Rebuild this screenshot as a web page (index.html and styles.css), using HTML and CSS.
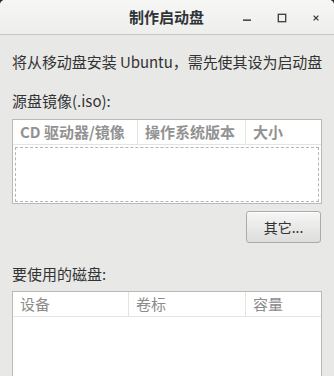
FILE: index.html
```html
<!DOCTYPE html>
<html lang="zh">
<head>
<meta charset="utf-8">
<title>制作启动盘</title>
<link rel="stylesheet" href="styles.css">
</head>
<body>
<div class="window">
  <div class="titlebar">
    <div class="title">制作启动盘</div>
    <div class="controls">
      <span class="ctl"><svg width="12" height="12" viewBox="0 0 12 12"><rect x="2" y="7.4" width="8" height="1.5" fill="#3c3c3c"/></svg></span>
      <span class="ctl"><svg width="12" height="12" viewBox="0 0 12 12"><rect x="2.3" y="2.3" width="7.4" height="7.4" fill="none" stroke="#3c3c3c" stroke-width="1.3"/></svg></span>
      <span class="ctl"><svg width="12" height="12" viewBox="0 0 12 12"><path d="M3.6 3.6 L8.4 8.4 M8.4 3.6 L3.6 8.4" stroke="#3c3c3c" stroke-width="1.3"/></svg></span>
    </div>
  </div>
  <div class="content">
    <p class="intro">将从移动盘安装 Ubuntu，需先使其设为启动盘</p>
    <p class="label l2">源盘镜像(.iso):</p>
    <div class="table t1">
      <div class="thead">
        <div class="th c1">CD 驱动器/镜像</div>
        <div class="th c2">操作系统版本</div>
        <div class="th c3">大小</div>
      </div>
      <div class="tbody"><div class="drop"></div></div>
    </div>
    <div class="btnrow"><button class="btn">其它...</button></div>
    <p class="label l3">要使用的磁盘:</p>
    <div class="table t2">
      <div class="thead">
        <div class="th d1">设备</div>
        <div class="th d2">卷标</div>
        <div class="th d3">容量</div>
      </div>
      <div class="tbody2"></div>
    </div>
  </div>
</div>
</body>
</html>
```
FILE: styles.css
```css
* { box-sizing: border-box; }
html, body { margin: 0; padding: 0; background: #2a2a2a; }
body { width: 334px; height: 376px; overflow: hidden; font-family: "Noto Sans CJK SC", "DejaVu Sans", sans-serif; }
.window { width: 334px; height: 376px; background: #e8e8e7; border-radius: 5px 5px 0 0; overflow: hidden; display: flex; flex-direction: column; }
.titlebar { height: 35px; flex: none; background: linear-gradient(#f6f6f5, #eeeeec); border-bottom: 1px solid #c6c6c4; position: relative; display: flex; align-items: center; justify-content: center; }
.title { font-size: 15px; font-weight: bold; color: #2e3436; margin-left: -1px; line-height: 20px; }
.controls { position: absolute; right: 12px; top: 12px; display: flex; gap: 23px; }
.ctl { width: 12px; height: 12px; display: block; }
.ctl + .ctl + .ctl { margin-left: -1px; }
.ctl svg { display: block; }
.content { padding: 0 12px; display: flex; flex-direction: column; }
p { margin: 0; }
.intro { margin-top: 17px; font-size: 15px; line-height: 20px; color: #333; white-space: nowrap; letter-spacing: -0.05px; }
.label { font-size: 15px; line-height: 20px; color: #333; }
.l2 { margin-top: 19px; }
.table { background: #fff; border: 1px solid #b9b9b7; margin-top: 8px; }
.thead { display: flex; height: 25px; border-bottom: 1px solid #e4e4e2; }
.th { font-size: 15px; font-weight: bold; color: #929292; line-height: 24px; padding-left: 7px; border-right: 1px solid #e4e4e2; white-space: nowrap; overflow: hidden; }
.th:last-child { border-right: none; }
.c1 { width: 125px; }
.c2 { width: 108px; }
.c3 { flex: 1; }
.d1 { width: 116px; font-weight: normal; color: #8c8c8c; }
.d2 { width: 117px; font-weight: normal; color: #8c8c8c; }
.d3 { flex: 1; font-weight: normal; color: #8c8c8c; }
.tbody { padding: 2px 2px 1px 2px; }
.drop { height: 55px; border: 1px dashed #b4b4b4; }
.btnrow { display: flex; justify-content: flex-end; margin-top: 7px; padding-right: 1px; }
.btn { width: 75px; height: 32px; border: 1px solid #ababab; border-radius: 3px; background: linear-gradient(#f6f6f6, #dddddb); font-family: inherit; font-size: 14px; color: #333; padding: 0; box-shadow: inset 0 1px 0 #fff; }
.l3 { margin-top: 21px; }
.t2 { margin-top: 7px; height: 100px; }
.tbody2 { height: 70px; }
```
